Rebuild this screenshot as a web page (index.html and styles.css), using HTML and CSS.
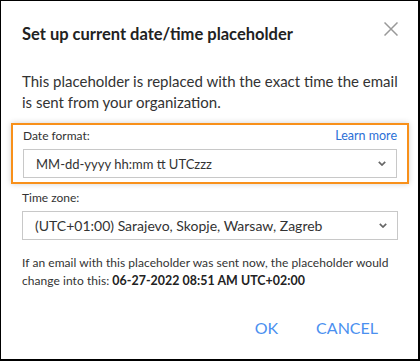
FILE: index.html
```html
<!DOCTYPE html>
<html lang="en">
<head>
  <meta charset="UTF-8">
  <meta name="viewport" content="width=device-width, initial-scale=1.0">
  <title>Set up current date/time placeholder</title>
  <link rel="stylesheet" href="styles.css">
</head>
<body>

  <div class="dialog">
    <!-- Header -->
    <div class="dialog-header">
      <h2>Set up current date/time placeholder</h2>
      <button type="button" class="close" aria-label="Close">
        <svg width="14" height="14" viewBox="0 0 14 14"><path d="M0.5 0.5L13.5 13.5M13.5 0.5L0.5 13.5" stroke="#999" stroke-width="1.5" fill="none"/></svg>
      </button>
    </div>

    <p class="intro">This placeholder is replaced with the exact time the email is sent from your organization.</p>

    <div class="field highlight">
      <div class="label-row">
        <label for="dateFormat">Date format:</label>
        <a href="#" class="learn">Learn more</a>
      </div>
      <div class="select" id="dateFormat">
        <span>MM-dd-yyyy hh:mm tt UTCzzz</span>
        <svg width="8" height="5" viewBox="0 0 8 5"><path d="M0.8 0.8L4 4L7.2 0.8" stroke="#666" stroke-width="1.7" fill="none"/></svg>
      </div>
    </div>

    <div class="field">
      <div class="label-row">
        <label for="timeZone">Time zone:</label>
      </div>
      <div class="select" id="timeZone">
        <span>(UTC+01:00) Sarajevo, Skopje, Warsaw, Zagreb</span>
        <svg width="8" height="5" viewBox="0 0 8 5"><path d="M0.8 0.8L4 4L7.2 0.8" stroke="#666" stroke-width="1.7" fill="none"/></svg>
      </div>
    </div>

    <p class="preview">If an email with this placeholder was sent now, the placeholder would change into this: <b>06-27-2022 08:51 AM UTC+02:00</b></p>

    <div class="actions">
      <button type="button" class="btn">OK</button>
      <button type="button" class="btn">CANCEL</button>
    </div>
  </div>

</body>
</html>
```

FILE: styles.css
```css
/* General Styles */
body {
  margin: 0;
  background: #fff;
  font-family: 'Lato', 'Open Sans', sans-serif;
  color: #333;
}

/* Dialog */
.dialog {
  width: 420px;
  height: 361px;
  box-sizing: border-box;
  border-style: solid;
  border-color: #000;
  border-width: 1px 2px 2px 1px;
  padding: 0 20px 0 21px;
  display: flex;
  flex-direction: column;
}

.dialog-header {
  display: flex;
  justify-content: space-between;
  align-items: flex-start;
  padding-top: 22px;
}
.dialog-header h2 {
  margin: 0;
  font-size: 16.5px;
  font-weight: 700;
  color: #222;
  line-height: 22px;
}
.close {
  border: none;
  background: none;
  padding: 0;
  margin: -1px 0 0;
  cursor: pointer;
}

.intro {
  margin: 26px 0 10px;
  font-size: 15px;
  line-height: 21px;
}

/* Fields */
.field {
  margin-bottom: 8px;
}
.highlight {
  margin: 0 -11px 5px;
  padding: 2px 10px 4px;
  border: 2px solid #f8901a;
  box-shadow: 0 0 6px rgba(0, 0, 0, 0.18);
}
.label-row {
  display: flex;
  justify-content: space-between;
  align-items: baseline;
  font-size: 12px;
  line-height: 18px;
  margin-bottom: 4px;
}
.learn {
  color: #2b6fd6;
  font-size: 12.5px;
  text-decoration: none;
}
.select {
  height: 29px;
  box-sizing: border-box;
  border: 1px solid #c8c8c8;
  display: flex;
  align-items: center;
  justify-content: space-between;
  padding: 0 10px 0 12px;
  font-size: 14px;
  color: #333;
}
#dateFormat span {
  font-size: 13px;
}

.preview {
  margin: 6px 0 0;
  font-size: 12px;
  line-height: 18px;
  letter-spacing: 0.05px;
}
.preview b {
  color: #222;
  font-size: 12.4px;
}

/* Buttons */
.actions {
  display: flex;
  justify-content: flex-end;
  gap: 38px;
  margin-top: auto;
  padding: 0 20px 22px 0;
}
.btn {
  border: none;
  background: none;
  padding: 0;
  font-family: inherit;
  font-size: 16px;
  color: #4a90f0;
  cursor: pointer;
}
```
